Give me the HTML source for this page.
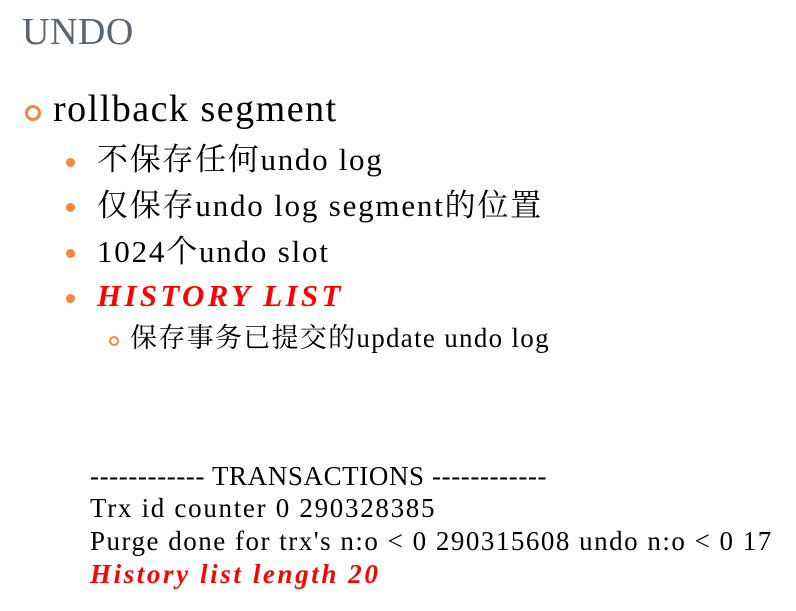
<!DOCTYPE html>
<html><head><meta charset="utf-8"><style>
body{margin:0;width:796px;height:611px;background:#fff;position:relative;overflow:hidden;font-family:"Liberation Serif","Noto Serif CJK SC",serif;color:#000}
.t{position:absolute;white-space:nowrap;line-height:1}
.ring{position:absolute;border-radius:50%;border:solid #f5873a;box-sizing:border-box}
.dot{position:absolute;width:9px;height:9px;border-radius:50%;background:#f5873a}
.red{color:#f00;font-weight:bold;font-style:italic}
</style></head><body>
<div class="t" style="left:22px;top:13px;font-size:38px;color:#5a6473;letter-spacing:0.5px">UNDO</div>
<div class="ring" style="left:25px;top:105px;width:16px;height:16px;border-width:3.5px"></div>
<div class="t" style="left:53px;top:90px;font-size:38px;letter-spacing:1.5px">rollback segment</div>
<div class="dot" style="left:66px;top:158px"></div>
<div class="t" style="left:97px;top:144px;font-size:31px;letter-spacing:1.7px">不保存任何undo log</div>
<div class="dot" style="left:66px;top:203px"></div>
<div class="t" style="left:97px;top:190px;font-size:31px;letter-spacing:1.8px">仅保存undo log segment的位置</div>
<div class="dot" style="left:66px;top:249px"></div>
<div class="t" style="left:97px;top:236px;font-size:31px;letter-spacing:1.8px">1024个undo slot</div>
<div class="dot" style="left:66px;top:294px"></div>
<div class="t red" style="left:97px;top:280px;font-size:31px;letter-spacing:3.3px">HISTORY LIST</div>
<div class="ring" style="left:109px;top:336px;width:10px;height:10px;border-width:2px"></div>
<div class="t" style="left:130px;top:325px;font-size:27px;letter-spacing:1.3px">保存事务已提交的update undo log</div>
<div class="t" style="left:90px;top:463px;font-size:27px;letter-spacing:0.6px">------------ TRANSACTIONS ------------</div>
<div class="t" style="left:90px;top:495px;font-size:27px;letter-spacing:1.7px">Trx id counter 0 290328385</div>
<div class="t" style="left:90px;top:528px;font-size:27px;letter-spacing:1.5px">Purge done for trx's n:o &lt; 0 290315608 undo n:o &lt; 0 17</div>
<div class="t red" style="left:90px;top:561px;font-size:27px;letter-spacing:2.6px">History list length 20</div>
</body></html>
